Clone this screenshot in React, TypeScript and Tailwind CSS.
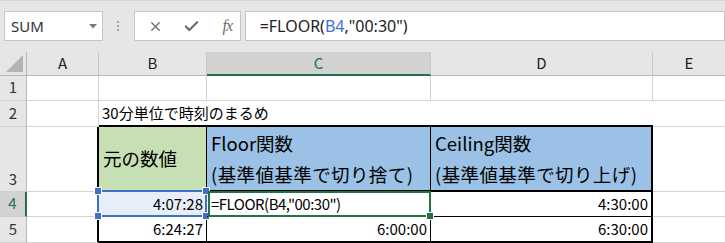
import { X, Check } from "lucide-react";

const jp = { fontFamily: '"Noto Sans CJK JP", "Noto Sans", sans-serif' };

function ColHead({ label, active, last }: { label: string; active?: boolean; last?: boolean }) {
  return (
    <div
      className={
        "flex items-center justify-center text-[15px] border-b " +
        (last ? "" : "border-r border-r-[#c8c8c8] ") +
        (active
          ? "bg-[#d2d2d2] text-[#217346] border-b-2 border-b-[#217346]"
          : "bg-[#e6e6e6] text-[#222] border-b-[#b8b8b8]")
      }
    >
      {label}
    </div>
  );
}

function RowHead({ n, active, bottom }: { n: number; active?: boolean; bottom?: boolean }) {
  return (
    <div
      className={
        "flex justify-center text-[15px] border-b border-b-[#cfcfcf] pb-[1px] " +
        (bottom ? "items-end " : "items-center ") +
        (active
          ? "bg-[#d2d2d2] text-[#217346] border-r-2 border-r-[#217346]"
          : "bg-[#e6e6e6] text-[#333] border-r border-r-[#b8b8b8]")
      }
    >
      {n}
    </div>
  );
}

export default function App() {
  return (
    <div className="w-[725px] h-[243px] bg-white overflow-hidden text-black" style={jp}>
      {/* formula bar */}
      <div className="h-[52px] bg-[#e6e6e6] border-t border-[#d6d6d6] flex items-start pt-[10px] pl-[4px]">
        <div className="w-[101px] h-[30px] bg-white border border-[#c6c6c6] flex items-center justify-between pl-[6px] pr-[5px]">
          <span className="text-[15px] text-[#333]" style={{ fontFamily: '"Noto Sans", sans-serif' }}>
            SUM
          </span>
          <svg width="8" height="5" viewBox="0 0 8 5">
            <path d="M0 0h8L4 4.5z" fill="#7a7a7a" />
          </svg>
        </div>
        <div className="w-[31px] h-[30px] flex flex-col items-center justify-center gap-[2px]">
          <span className="w-[2px] h-[2px] bg-[#a6a6a6]" />
          <span className="w-[2px] h-[2px] bg-[#a6a6a6]" />
          <span className="w-[2px] h-[2px] bg-[#a6a6a6]" />
        </div>
        <div className="w-[109px] h-[30px] bg-white border border-[#c6c6c6] flex items-center pl-[13px]">
          <X size={15} strokeWidth={2} color="#6a6a6a" />
          <Check size={17} strokeWidth={3} color="#6a6a6a" className="ml-[20px]" />
          <span
            className="ml-[23px] text-[16px] italic text-[#6a6a6a] tracking-[-1px]"
            style={{ fontFamily: '"Liberation Serif", serif' }}
          >
            fx
          </span>
        </div>
        <div
          className="ml-[4px] w-[490px] h-[30px] bg-white border border-[#c6c6c6] flex items-center pl-[14px] text-[16px] text-[#222]"
          style={{ fontFamily: '"Noto Sans", sans-serif' }}
        >
          =FLOOR(<span className="text-[#3a74d4]">B4</span>,"00:30")
        </div>
      </div>

      {/* grid */}
      <div className="grid grid-cols-[27px_72px_108px_224px_222px_72px] grid-rows-[24px_25px_26px_65px_25px_26px]">
        {/* header row */}
        <div className="bg-[#e6e6e6] border-r border-b border-r-[#b8b8b8] border-b-[#b8b8b8] flex items-end justify-end pr-[3px] pb-[3px]">
          <svg width="17" height="17" viewBox="0 0 17 17">
            <path d="M17 0V17H0z" fill="#b4b4b4" />
          </svg>
        </div>
        <ColHead label="A" />
        <ColHead label="B" />
        <ColHead label="C" active />
        <ColHead label="D" />
        <ColHead label="E" last />

        {/* row 1 */}
        <RowHead n={1} />
        <div className="border-r border-b border-[#d4d4d4]" />
        <div className="border-r border-b border-[#d4d4d4]" />
        <div className="border-r border-b border-[#d4d4d4]" />
        <div className="border-r border-b border-[#d4d4d4]" />
        <div className="border-b border-[#d4d4d4]" />

        {/* row 2 */}
        <RowHead n={2} />
        <div className="border-r border-b border-[#d4d4d4]" />
        <div className="border-b-2 border-b-black flex items-center pl-[3px] text-[15px] whitespace-nowrap">
          30分単位で時刻のまるめ
        </div>
        <div className="border-b-2 border-b-black" />
        <div className="border-b-2 border-b-black" />
        <div className="border-b border-[#d4d4d4]" />

        {/* row 3 */}
        <RowHead n={3} bottom />
        <div className="border-r-2 border-r-black border-b border-b-[#d4d4d4]" />
        <div className="bg-[#c6e0b4] border-r border-r-black border-b-2 border-b-black flex items-center pl-[4px] text-[18.5px] leading-[31px]">
          元の数値
        </div>
        <div className="bg-[#9bc2e6] border-r border-r-black border-b-2 border-b-black flex flex-col justify-center pl-[4px] text-[18.5px] leading-[31px] whitespace-nowrap">
          <span>Floor関数</span>
          <span className="tracking-[0.4px]">(基準値基準で切り捨て)</span>
        </div>
        <div className="bg-[#9bc2e6] border-r-2 border-r-black border-b-2 border-b-black flex flex-col justify-center pl-[4px] text-[18.5px] leading-[31px] whitespace-nowrap">
          <span>Ceiling関数</span>
          <span className="tracking-[0.4px]">(基準値基準で切り上げ)</span>
        </div>
        <div className="border-b border-[#d4d4d4]" />

        {/* row 4 */}
        <RowHead n={4} active />
        <div className="border-r-2 border-r-black border-b border-b-[#d4d4d4]" />
        <div className="relative bg-[#e8eef9] border-r border-r-black border-b border-b-black flex items-center justify-end pr-[3px] text-[15px]">
          4:07:28
          <div className="absolute -left-[2px] -top-[2px] -right-[1px] -bottom-[1px] border-2 border-[#3f6fc6]">
            <span className="absolute -left-[4px] -top-[4px] w-[6px] h-[6px] bg-[#3f6fc6] outline outline-1 outline-white" />
            <span className="absolute -right-[4px] -top-[4px] w-[6px] h-[6px] bg-[#3f6fc6] outline outline-1 outline-white" />
            <span className="absolute -left-[4px] -bottom-[4px] w-[6px] h-[6px] bg-[#3f6fc6] outline outline-1 outline-white" />
            <span className="absolute -right-[4px] -bottom-[4px] w-[6px] h-[6px] bg-[#3f6fc6] outline outline-1 outline-white" />
          </div>
        </div>
        <div className="relative border-r border-r-black border-b border-b-black flex items-center pl-[4px] text-[15px] tracking-[-0.5px] whitespace-nowrap">
          =FLOOR(B4,"00:30")
          <div className="absolute left-[1px] -top-[1px] -right-[1px] -bottom-[1px] border-2 border-[#217346]">
            <span className="absolute -right-[4px] -bottom-[4px] w-[6px] h-[6px] bg-[#217346] outline outline-1 outline-white" />
          </div>
        </div>
        <div className="border-r-2 border-r-black border-b border-b-black flex items-center justify-end pr-[3px] text-[15px]">
          4:30:00
        </div>
        <div className="border-b border-[#d4d4d4]" />

        {/* row 5 */}
        <RowHead n={5} />
        <div className="border-r-2 border-r-black border-b border-b-[#d4d4d4]" />
        <div className="border-r border-r-black border-b-2 border-b-black flex items-center justify-end pr-[3px] text-[15px]">
          6:24:27
        </div>
        <div className="border-r border-r-black border-b-2 border-b-black flex items-center justify-end pr-[3px] text-[15px]">
          6:00:00
        </div>
        <div className="border-r-2 border-r-black border-b-2 border-b-black flex items-center justify-end pr-[3px] text-[15px]">
          6:30:00
        </div>
        <div className="border-b border-[#d4d4d4]" />
      </div>
    </div>
  );
}
